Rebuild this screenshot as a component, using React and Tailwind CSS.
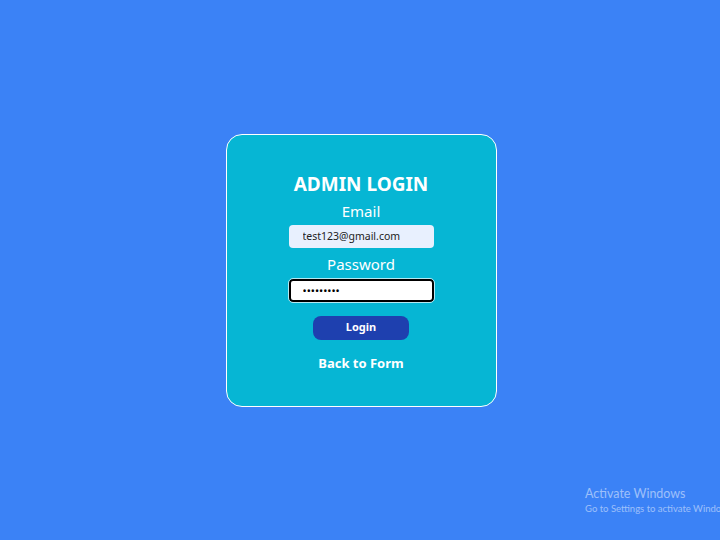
import React from "react";

const font = { fontFamily: '"Noto Sans", "Open Sans", Arial, sans-serif' };

export default function App() {
  return (
    <div
      className="relative min-h-screen w-full overflow-hidden bg-[#3b82f6] flex items-center justify-center"
      style={font}
    >
      {/* login card */}
      <div className="ml-[2px] w-[271px] rounded-2xl border-[1.5px] border-white bg-[#06b6d4] pt-[35px] pb-[33px] flex flex-col items-center text-white">
        <h1 className="text-[19px] leading-[28px] font-bold">ADMIN LOGIN</h1>
        <label className="mt-[1px] text-[15px] leading-[24px]">Email</label>
        <input
          readOnly
          defaultValue="test123@gmail.com"
          className="mt-[2px] w-[145px] h-[23px] rounded bg-[#e8f0fe] pl-[14px] text-[10.5px] text-[#222] outline-none"
        />
        <label className="mt-[4px] text-[15px] leading-[24px]">Password</label>
        <input
          type="password"
          readOnly
          defaultValue="123456789"
          className="mt-[3px] w-[145px] h-[23px] rounded border-2 border-black bg-white pl-[12px] text-[11px] text-black outline outline-1 outline-white/70"
        />
        <button className="mt-[14px] w-[96px] h-[24px] rounded-lg bg-[#1e40af] text-[11px] font-bold text-white">
          Login
        </button>
        <a className="mt-[13px] text-[13px] leading-[20px] font-bold text-white cursor-pointer">Back to Form</a>
      </div>

      {/* windows watermark */}
      <div
        className="absolute left-[585px] top-[486px] whitespace-nowrap text-white/50 leading-tight"
        style={{ fontFamily: 'Lato, "Noto Sans", sans-serif' }}
      >
        <div className="text-[12.5px]">Activate Windows</div>
        <div className="text-[9.5px] mt-[1px]">Go to Settings to activate Windows.</div>
      </div>
    </div>
  );
}
